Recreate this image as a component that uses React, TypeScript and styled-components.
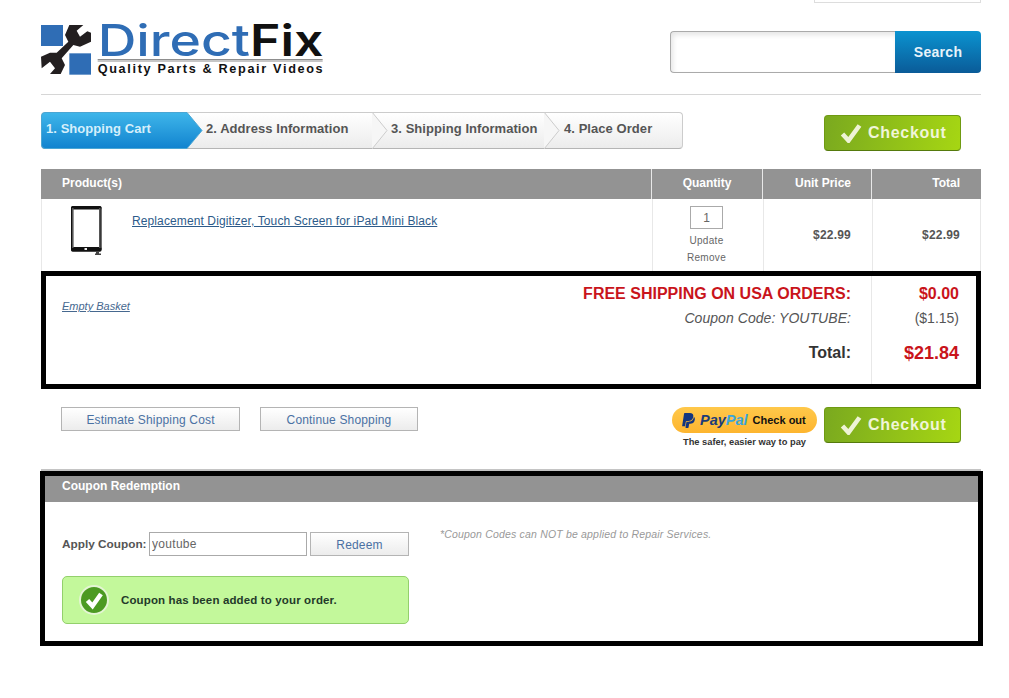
import React from "react";
import styled, { createGlobalStyle } from "styled-components";
import { FaPaypal } from "react-icons/fa";

const Global = createGlobalStyle`
  html, body { margin: 0; padding: 0; background: #fff; overflow: hidden; }
  body { font-family: "Liberation Sans", Arial, sans-serif; color: #555; }
  * { box-sizing: border-box; }
`;

const Page = styled.div`
  width: 940px;
  margin-left: 41px;
`;
const TopStrip = styled.div`
  width: 167px;
  height: 3px;
  margin-left: auto;
  border: 1px solid #ddd;
  border-top: 0;
`;
const Header = styled.header`
  display: flex;
  justify-content: space-between;
  align-items: flex-start;
  height: 92px;
  border-bottom: 1px solid #d6d6d6;
`;
const LogoSvg = styled.svg`
  display: block;
  width: 283px;
  height: 72px;
  margin-top: 1px;
`;
const SearchBox = styled.form`
  display: flex;
  width: 311px;
  height: 42px;
  margin: 28px 0 0;
`;
const SearchInput = styled.input`
  flex: 1;
  min-width: 0;
  border: 1px solid #aaa;
  border-right: 0;
  border-radius: 4px 0 0 4px;
  box-shadow: inset 2px 3px 5px #e6e6e6;
  outline: 0;
`;
const SearchButton = styled.button`
  width: 86px;
  border: 0;
  border-radius: 0 4px 4px 0;
  background: linear-gradient(#0b93d0, #0a5b98);
  color: #e8f3fa;
  font: bold 14px "Liberation Sans", Arial, sans-serif;
  letter-spacing: 0.3px;
  padding: 0;
`;
const StepsRow = styled.div`
  display: flex;
  justify-content: space-between;
  align-items: flex-start;
  height: 39px;
  margin-top: 17px;
  padding-right: 20px;
`;
const StepsBar = styled.div`
  display: flex;
  width: 642px;
  height: 37px;
  border: 1px solid #ccc;
  border-bottom-color: #b5b5b5;
  border-radius: 4px;
  background: linear-gradient(#fff, #ececec);
`;
const Step = styled.div<{ $w: number; $pad: number; $active?: boolean }>`
  position: relative;
  flex: 0 0 ${(p) => p.$w}px;
  padding-left: ${(p) => p.$pad}px;
  font-size: 13px;
  font-weight: bold;
  letter-spacing: 0.06px;
  line-height: 31px;
  color: ${(p) => (p.$active ? "#d5effb" : "#555")};
  white-space: nowrap;
`;
const StepLabel = styled.span`
  position: relative;
`;
const StepShape = styled.svg`
  position: absolute;
  left: -1px;
  top: -1px;
  width: 162px;
  height: 37px;
`;
const StepChevron = styled.svg`
  position: absolute;
  right: -16px;
  top: -1px;
  width: 16px;
  height: 37px;
`;
const CheckoutBtn = styled.button<{ $top?: number }>`
  display: flex;
  align-items: center;
  width: 137px;
  height: 36px;
  margin-top: ${(p) => p.$top ?? 0}px;
  padding: 0 0 0 15px;
  gap: 6px;
  border: 1px solid #6f9a12;
  border-bottom-color: #557a0c;
  border-radius: 4px;
  background: linear-gradient(100deg, #7aa91f, #a6d613);
  color: #f0f5d8;
  font: bold 16px "Liberation Sans", Arial, sans-serif;
  letter-spacing: 0.7px;
`;
const CheckSvg = styled.svg`
  width: 22px;
  height: 20px;
  flex: none;
`;
const Table = styled.section`
  margin-top: 18px;
`;
const HeadRow = styled.div`
  display: grid;
  grid-template-columns: 610px 111px 109px 110px;
  height: 30px;
  background: #939393;
  color: #fff;
  font-size: 12px;
  font-weight: bold;
  line-height: 29px;
`;
const HeadCell = styled.div<{ $align?: string; $pr?: number; $pl?: number }>`
  text-align: ${(p) => p.$align ?? "left"};
  padding: 0 ${(p) => p.$pr ?? 0}px 0 ${(p) => p.$pl ?? 0}px;
  & + & { border-left: 1px solid #e8e8e8; }
`;
const ItemRow = styled.div`
  display: grid;
  grid-template-columns: 610px 111px 109px 110px;
  height: 72px;
  border-left: 1px solid #e8e8e8;
  border-right: 1px solid #e8e8e8;
`;
const ProductCell = styled.div`
  display: flex;
  align-items: flex-start;
  padding: 7px 0 0 29px;
  gap: 29px;
`;
const TabletSvg = styled.svg`
  width: 32px;
  height: 50px;
  flex: none;
`;
const ProductLink = styled.a`
  margin-top: 8px;
  font-size: 12px;
  letter-spacing: 0.11px;
  color: #2d5b8a;
  text-decoration: underline;
`;
const QtyCell = styled.div`
  display: flex;
  flex-direction: column;
  align-items: center;
  padding: 7px 3px 0 0;
  border-left: 1px solid #e8e8e8;
`;
const QtyInput = styled.input`
  width: 33px;
  height: 23px;
  border: 1px solid #aaa;
  padding: 0;
  text-align: center;
  font: 12px "Liberation Sans", Arial, sans-serif;
  color: #666;
  outline: 0;
`;
const QtyAction = styled.span`
  display: block;
  margin-top: 5px;
  height: 14px;
  line-height: 14px;
  font-size: 10px;
  font-weight: normal;
  letter-spacing: 0.3px;
  color: #666;
  & + & { margin-top: 3px; }
`;
const PriceCell = styled.div<{ $pr: number }>`
  display: flex;
  align-items: center;
  justify-content: flex-end;
  padding: 0 ${(p) => p.$pr}px 0 0;
  font-size: 12px;
  letter-spacing: 0.2px;
  font-weight: bold;
  color: #555;
  border-left: 1px solid #e8e8e8;
`;
const SummaryBox = styled.div`
  display: flex;
  height: 118px;
  border: 5px solid #000;
`;
const LinkCol = styled.div`
  flex: 0 0 230px;
  padding: 20px 0 0 16px;
`;
const EmptyLink = styled.a`
  font-size: 11px;
  font-style: italic;
  line-height: 14px;
  color: #46688f;
  text-decoration: underline;
  display: inline-block;
`;
const LabelCol = styled.div`
  flex: 1;
  padding-right: 20px;
  text-align: right;
`;
const ValueCol = styled.div`
  flex: 0 0 105px;
  padding-right: 17px;
  border-left: 1px solid #e8e8e8;
  text-align: right;
`;
const Line = styled.div<{ $h: number; $kind: "red" | "italic" | "plain" | "total" | "big" }>`
  height: ${(p) => p.$h}px;
  line-height: ${(p) => p.$h}px;
  white-space: nowrap;
  font-size: ${(p) => (p.$kind === "big" ? 18 : p.$kind === "red" || p.$kind === "total" ? 16 : 14)}px;
  font-weight: ${(p) => (p.$kind === "italic" || p.$kind === "plain" ? "normal" : "bold")};
  font-style: ${(p) => (p.$kind === "italic" ? "italic" : "normal")};
  letter-spacing: ${(p) => (p.$kind === "italic" ? 0.05 : 0)}px;
  color: ${(p) =>
    p.$kind === "red" || p.$kind === "big" ? "#c9141b" : p.$kind === "total" ? "#333" : "#555"};
`;
const ActionRow = styled.div`
  display: flex;
  align-items: flex-start;
  height: 36px;
  margin-top: 18px;
  padding: 0 20px;
`;
const PlainBtn = styled.button<{ $w: number }>`
  width: ${(p) => p.$w}px;
  height: 24px;
  padding: 2px 0 0;
  border: 1px solid #b4b4b4;
  background: linear-gradient(#fff, #ececec);
  color: #4a71a3;
  font: 12px "Liberation Sans", Arial, sans-serif;
  letter-spacing: 0.16px;
`;
const ContinueWrap = styled.div`
  margin-left: 20px;
`;
const RightActions = styled.div`
  display: flex;
  align-items: flex-start;
  gap: 7px;
  margin-left: auto;
`;
const PayPalWrap = styled.div`
  width: 145px;
  text-align: center;
`;
const PayPalPill = styled.div`
  display: flex;
  align-items: center;
  height: 26px;
  padding-left: 8px;
  border-radius: 13px;
  background: linear-gradient(#ffc84a, #fdb52f);
  color: #111;
  font-size: 11px;
  font-weight: bold;
`;
const PayWord = styled.span<{ $light?: boolean }>`
  font-size: 14.5px;
  font-style: italic;
  font-weight: bold;
  color: ${(p) => (p.$light ? "#3aa5dc" : "#1c3b78")};
`;
const PayBrand = styled.span`
  margin: 0 5px 0 3px;
`;
const PayTag = styled.div`
  margin-top: 3px;
  font-size: 9.3px;
  font-weight: bold;
  line-height: 12px;
  color: #333;
`;
const Rule = styled.div`
  height: 2px;
  margin-top: 26px;
  background: #c4c4c4;
`;
const CouponBox = styled.section`
  height: 175px;
  margin: 0 -2px 0 -1px;
  border: 5px solid #000;
`;
const CouponHead = styled.div`
  height: 26px;
  padding-left: 17px;
  background: #939393;
  color: #fff;
  font-size: 12px;
  font-weight: bold;
  line-height: 20px;
`;
const CouponBody = styled.div`
  display: flex;
  padding: 30px 0 0 17px;
`;
const CouponForm = styled.div`
  width: 347px;
`;
const CouponRow = styled.div`
  display: flex;
  align-items: center;
`;
const CouponLabel = styled.label`
  flex: 0 0 87px;
  font-size: 11.8px;
  font-weight: bold;
  color: #555;
  white-space: nowrap;
`;
const CouponInput = styled.input`
  width: 158px;
  height: 24px;
  padding: 0 2px;
  border: 1px solid #aaa;
  font: 12px "Liberation Sans", Arial, sans-serif;
  letter-spacing: 0.3px;
  color: #666;
  outline: 0;
`;
const RedeemWrap = styled.div`
  margin-left: 3px;
`;
const Alert = styled.div`
  display: flex;
  align-items: center;
  gap: 12px;
  height: 48px;
  margin-top: 20px;
  padding-left: 16px;
  border: 1px solid #93d06c;
  border-radius: 5px;
  background: #c3f89b;
  font-size: 11.5px;
  font-weight: bold;
  letter-spacing: 0.14px;
  color: #233a2a;
`;
const AlertIcon = styled.svg`
  width: 30px;
  height: 30px;
  flex: none;
`;
const CouponNote = styled.div`
  margin: -5px 0 0 31px;
  font-size: 10.5px;
  font-style: italic;
  line-height: 14px;
  letter-spacing: 0.18px;
  color: #999;
  white-space: nowrap;
  height: 14px;
`;

const Logo = () => (
  <LogoSvg viewBox="33 12 849 216" role="img" aria-label="DirectFix">
    <rect x="33" y="75" width="66" height="63" fill="#2f6db5" />
    <rect x="118" y="160" width="65" height="64" fill="#2f6db5" />
    <path
      d="M118 75L160 75L140 92L150 110L172 94L183 98L183 125L150 140L130 135L95 175L105 195L92 222L60 222L75 205L60 185L35 205L33 170L60 158L80 158L115 125L105 105Z"
      fill="#231f20"
    />
    <text
      x="203"
      y="168"
      fontFamily="Inter, 'Liberation Sans', sans-serif"
      fontSize="132"
      fontWeight="500"
      fill="#2f6db5"
      textLength="457"
      lengthAdjust="spacingAndGlyphs"
    >
      Direct
    </text>
    <text
      x="660"
      y="168"
      fontFamily="Inter, 'Liberation Sans', sans-serif"
      fontSize="132"
      fontWeight="600"
      fill="#111"
      textLength="220"
      lengthAdjust="spacingAndGlyphs"
    >
      Fix
    </text>
    <rect x="203" y="178" width="675" height="3" fill="#555" />
    <rect x="203" y="183" width="675" height="2" fill="#aaa" />
    <text
      x="203"
      y="218"
      fontFamily="'Liberation Sans', Arial, sans-serif"
      fontSize="38"
      fontWeight="700"
      fill="#111"
      textLength="675"
      lengthAdjust="spacing"
    >
      Quality Parts &amp; Repair Videos
    </text>
  </LogoSvg>
);

const Chevron = () => (
  <StepChevron viewBox="0 0 16 37">
    <path d="M0 0L15 18.5L0 37Z" fill="#f6f6f6" />
    <path d="M0 0L15 18.5L0 37" fill="none" stroke="#ccc" />
  </StepChevron>
);

const Check = () => (
  <CheckSvg viewBox="0 0 22 20">
    <path d="M2.5 11L8.5 17.5L19.5 2.5" fill="none" stroke="#eef3d6" strokeWidth="4.6" />
  </CheckSvg>
);

const Checkout = ({ top }: { top?: number }) => (
  <CheckoutBtn type="button" $top={top}>
    <Check />
    Checkout
  </CheckoutBtn>
);

const Tablet = () => (
  <TabletSvg viewBox="0 0 32 50">
    <rect x="0.8" y="0.8" width="29" height="44" rx="2" fill="#fff" stroke="#111" strokeWidth="1.6" />
    <rect x="0" y="0" width="30.5" height="3.5" rx="1.5" fill="#111" />
    <rect x="0" y="41" width="30.5" height="4.5" rx="1.5" fill="#111" />
    <rect x="1" y="2" width="1.6" height="40" fill="#555" />
    <rect x="28" y="2" width="1.6" height="40" fill="#555" />
    <rect x="13.5" y="42" width="2.5" height="2" fill="#eee" />
    <path d="M25 45H28V47.5H30V49H24V47.5H25Z" fill="#444" />
  </TabletSvg>
);

export default function App() {
  return (
    <>
      <Global />
      <Page>
        <TopStrip />
        <Header>
          <Logo />
          <SearchBox>
            <SearchInput aria-label="Search" />
            <SearchButton type="button">Search</SearchButton>
          </SearchBox>
        </Header>

        <StepsRow>
          <StepsBar>
            <Step $w={145} $pad={4} $active>
              <StepShape viewBox="0 0 162 37">
                <defs>
                  <linearGradient id="stepBlue" x1="0" y1="0" x2="0" y2="1">
                    <stop offset="0" stopColor="#3fb6ea" />
                    <stop offset="1" stopColor="#1183cf" />
                  </linearGradient>
                </defs>
                <path
                  d="M4 .5H146L161 18.5L146 36.5H4Q.5 36.5 .5 33V4Q.5 .5 4 .5Z"
                  fill="url(#stepBlue)"
                  stroke="#4aa6d4"
                />
              </StepShape>
              <StepLabel>1. Shopping Cart</StepLabel>
            </Step>
            <Step $w={185} $pad={19}>
              <StepLabel>2. Address Information</StepLabel>
              <Chevron />
            </Step>
            <Step $w={172} $pad={19}>
              <StepLabel>3. Shipping Information</StepLabel>
              <Chevron />
            </Step>
            <Step $w={138} $pad={20}>
              <StepLabel>4. Place Order</StepLabel>
            </Step>
          </StepsBar>
          <Checkout top={3} />
        </StepsRow>

        <Table>
          <HeadRow>
            <HeadCell $pl={21}>Product(s)</HeadCell>
            <HeadCell $align="center">Quantity</HeadCell>
            <HeadCell $align="right" $pr={20}>Unit Price</HeadCell>
            <HeadCell $align="right" $pr={21}>Total</HeadCell>
          </HeadRow>
          <ItemRow>
            <ProductCell>
              <Tablet />
              <ProductLink href="#">Replacement Digitizer, Touch Screen for iPad Mini Black</ProductLink>
            </ProductCell>
            <QtyCell>
              <QtyInput readOnly value="1" aria-label="Quantity" />
              <QtyAction>Update</QtyAction>
              <QtyAction>Remove</QtyAction>
            </QtyCell>
            <PriceCell $pr={21}>$22.99</PriceCell>
            <PriceCell $pr={22}>$22.99</PriceCell>
          </ItemRow>
          <SummaryBox>
            <LinkCol>
              <EmptyLink href="#">Empty Basket</EmptyLink>
            </LinkCol>
            <LabelCol>
              <Line $h={36} $kind="red">FREE SHIPPING ON USA ORDERS:</Line>
              <Line $h={12} $kind="italic">Coupon Code: YOUTUBE:</Line>
              <Line $h={58} $kind="total">Total:</Line>
            </LabelCol>
            <ValueCol>
              <Line $h={36} $kind="red">$0.00</Line>
              <Line $h={12} $kind="plain">($1.15)</Line>
              <Line $h={58} $kind="big">$21.84</Line>
            </ValueCol>
          </SummaryBox>
        </Table>

        <ActionRow>
          <PlainBtn type="button" $w={179}>Estimate Shipping Cost</PlainBtn>
          <ContinueWrap>
            <PlainBtn type="button" $w={158}>Continue Shopping</PlainBtn>
          </ContinueWrap>
          <RightActions>
            <PayPalWrap>
              <PayPalPill>
                <FaPaypal size={17} color="#12357f" />
                <PayBrand>
                  <PayWord>Pay</PayWord>
                  <PayWord $light>Pal</PayWord>
                </PayBrand>
                Check out
              </PayPalPill>
              <PayTag>The safer, easier way to pay</PayTag>
            </PayPalWrap>
            <Checkout />
          </RightActions>
        </ActionRow>

        <Rule />
        <CouponBox>
          <CouponHead>Coupon Redemption</CouponHead>
          <CouponBody>
            <CouponForm>
              <CouponRow>
                <CouponLabel>Apply Coupon:</CouponLabel>
                <CouponInput readOnly value="youtube" aria-label="Coupon" />
                <RedeemWrap>
                  <PlainBtn type="button" $w={99}>Redeem</PlainBtn>
                </RedeemWrap>
              </CouponRow>
              <Alert>
                <AlertIcon viewBox="0 0 30 30">
                  <circle cx="15" cy="15" r="14" fill="#4c9a22" stroke="#e4f5d4" strokeWidth="2" />
                  <path d="M8.5 15.5L13.5 21L22 9" fill="none" stroke="#fff" strokeWidth="4.5" />
                </AlertIcon>
                Coupon has been added to your order.
              </Alert>
            </CouponForm>
            <CouponNote>*Coupon Codes can NOT be applied to Repair Services.</CouponNote>
          </CouponBody>
        </CouponBox>
      </Page>
    </>
  );
}
